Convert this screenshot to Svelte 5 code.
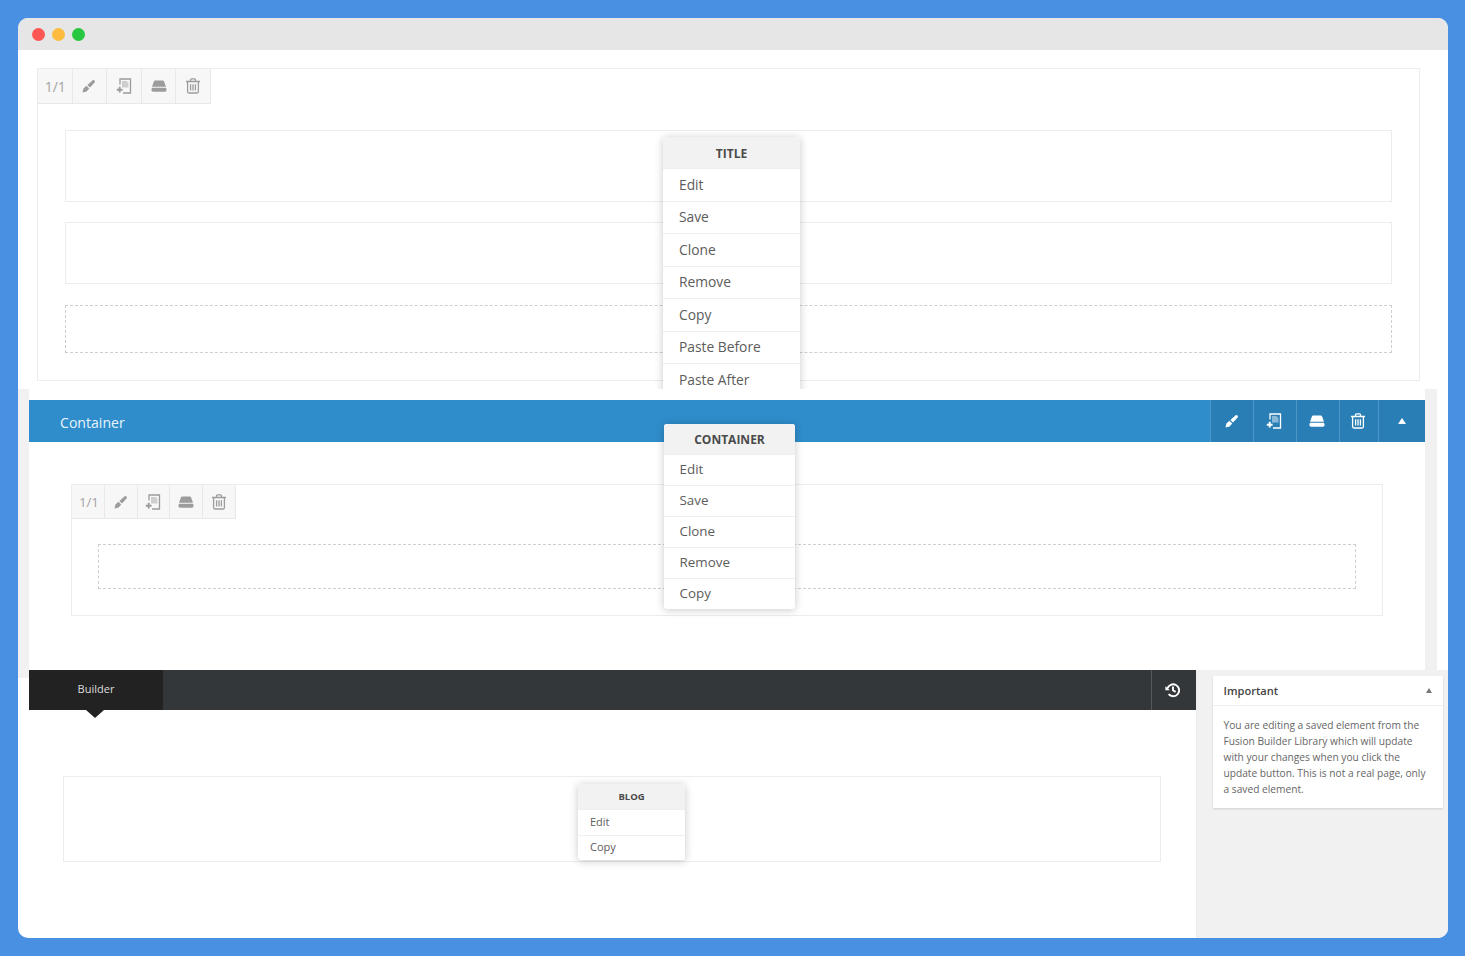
<script lang="ts">
  const titleItems = ["Edit", "Save", "Clone", "Remove", "Copy", "Paste Before", "Paste After"];
  const containerItems = ["Edit", "Save", "Clone", "Remove", "Copy"];
  const blogItems = ["Edit", "Copy"];
  const tools = ["pen", "import", "drive", "trash"];
</script>

{#snippet icon(name: string)}
  <svg class="icon" viewBox="0 0 16 16" aria-hidden="true">
    {#if name === "pen"}
      <path class="solid" d="M1.5 14.5 2.4 10.4 5.4 7.8 8.2 10.6 5.6 13.5ZM6.4 6.9 11.7 2.2C12.8 1.5 14.5 3.2 13.8 4.3L9 9.6Z" />
    {:else if name === "import"}
      <path class="line" d="M4 6.5V1H14.5V15H7" />
      <path class="soft" d="M6 3H10.5L12.5 5V9.5H6Z" />
      <path class="line thick" d="M.8 11.7H6.6M3.7 8.8V14.6" />
    {:else if name === "drive"}
      <path class="solid" d="M4.2 2.5H11.8C12.4 2.5 12.8 2.8 13 3.3L15 8.7H1L3 3.3C3.2 2.8 3.6 2.5 4.2 2.5ZM2 9.8H14C14.8 9.8 15.5 10.4 15.5 11.2V12.3C15.5 13.1 14.8 13.7 14 13.7H2C1.2 13.7 .5 13.1 .5 12.3V11.2C.5 10.4 1.2 9.8 2 9.8Z" />
    {:else if name === "trash"}
      <path class="line" d="M1 3.5H15M5.5 3.5V1.8C5.5 1.3 6 .8 6.5 .8H9.5C10 .8 10.5 1.3 10.5 1.8V3.5M2.6 3.5V13.5C2.6 14.3 3.2 15 3.9 15H12.1C12.8 15 13.4 14.3 13.4 13.5V3.5" />
      <path class="line" d="M5.6 6.2V12.5M8 6.2V12.5M10.4 6.2V12.5" />
    {/if}
  </svg>
{/snippet}

{#snippet toolbar()}
  <div class="toolbar">
    <span class="tool ratio">1/1</span>
    {#each tools as tool}
      <span class="tool">{@render icon(tool)}</span>
    {/each}
  </div>
{/snippet}

{#snippet menu(title: string, items: string[], kind: string)}
  <div class="menu {kind}">
    <div class="menu-head">{title}</div>
    {#each items as item}
      <div class="menu-item">{item}</div>
    {/each}
  </div>
{/snippet}

<div class="window">
  <header class="titlebar">
    <span class="dot red"></span>
    <span class="dot amber"></span>
    <span class="dot green"></span>
  </header>

  <section class="first">
    <div class="frame">
      {@render toolbar()}
      <div class="rows">
        <div class="row tall"></div>
        <div class="row mid"></div>
        <div class="row dashed"></div>
      </div>
    </div>
    {@render menu("TITLE", titleItems, "menu-title")}
  </section>

  <section class="second">
    <div class="container">
      <div class="bar">
        <span class="bar-label">Container</span>
        <div class="bar-actions">
          {#each tools as tool}
            <span class="bar-action">{@render icon(tool)}</span>
          {/each}
          <span class="bar-action last"><i class="caret-up white"></i></span>
        </div>
      </div>
      <div class="container-body">
        <div class="frame inner">
          {@render toolbar()}
          <div class="dashed-wrap">
            <div class="row dashed inner-dashed"></div>
          </div>
        </div>
      </div>
    </div>
    {@render menu("CONTAINER", containerItems, "menu-container")}
  </section>

  <section class="third">
    <div class="gutter"><div class="gutter-top"></div></div>
    <div class="main">
      <div class="tabs">
        <span class="tab">Builder</span>
        <span class="history">
          <svg class="icon" viewBox="0 0 16 16" aria-hidden="true">
            <path class="line thick" d="M2.4 6.6A6 6 0 1 1 3.6 12.2" />
            <path class="solid white-fill" d="M.4 4.2 4.8 8.2H.4Z" />
            <path class="line thick" d="M8 4.6V8.3L10.6 9.9" />
          </svg>
        </span>
      </div>
      <div class="main-body">
        <div class="row blog"></div>
      </div>
      {@render menu("BLOG", blogItems, "menu-blog")}
    </div>
    <aside class="sidebar">
      <div class="card">
        <div class="card-head">
          <span>Important</span>
          <i class="caret-up small"></i>
        </div>
        <p>You are editing a saved element from the Fusion Builder Library which will update with your changes when you click the update button. This is not a real page, only a saved element.</p>
      </div>
    </aside>
  </section>
</div>

<style>
  :global(body) {
    background: #4a90e2;
    font-family: "Open Sans", "Liberation Sans", sans-serif;
    color: #555;
  }

  .window {
    box-sizing: border-box;
    width: 1430px;
    height: 920px;
    margin: 18px 0 0 18px;
    background: #fff;
    border-radius: 10px;
    overflow: hidden;
    display: flex;
    flex-direction: column;
  }

  .titlebar {
    height: 32px;
    background: #e6e6e6;
    display: flex;
    align-items: center;
    gap: 7px;
    padding-left: 14px;
    flex: none;
  }

  .dot {
    width: 13px;
    height: 13px;
    border-radius: 50%;
  }

  .red { background: #fc5753; }
  .amber { background: #fdbc40; }
  .green { background: #27c83f; }

  section {
    position: relative;
    flex: none;
    box-sizing: border-box;
  }

  .first {
    height: 339px;
    padding: 18px 28px 0 19px;
    overflow: hidden;
  }

  .frame {
    box-sizing: border-box;
    border: 1px solid #ededed;
    height: 313px;
  }

  .toolbar {
    display: flex;
    width: max-content;
    background: #f7f7f7;
  }

  .tool {
    box-sizing: border-box;
    width: 34.6px;
    height: 35px;
    display: flex;
    align-items: center;
    justify-content: center;
    border-right: 1px solid #e8e8e8;
    border-bottom: 1px solid #e8e8e8;
    color: #9c9c9c;
    font-size: 14px;
  }

  .inner .tool {
    width: 32.8px;
    height: 34px;
  }

  .icon {
    width: 16px;
    height: 16px;
    display: block;
  }

  .solid { fill: currentColor; }
  .soft { fill: currentColor; opacity: 0.45; }
  .line { fill: none; stroke: currentColor; stroke-width: 1.3; }
  .thick { stroke-width: 1.9; }
  .white-fill { fill: #fff; }

  .rows {
    padding: 26px 27px 0;
    display: flex;
    flex-direction: column;
    gap: 20px;
  }

  .row {
    box-sizing: border-box;
    border: 1px solid #ededed;
  }

  .tall { height: 72px; }
  .mid { height: 62px; }

  .row.dashed {
    height: 48px;
    margin-top: 1px;
    border: 1px dashed #cfcfcf;
  }

  .menu {
    position: absolute;
    z-index: 2;
    background: #fff;
    border-radius: 3px;
    box-shadow: 0 1px 8px rgba(0, 0, 0, 0.22);
    color: #5c5c5c;
    font-size: 13.8px;
  }

  .menu-head {
    display: flex;
    align-items: center;
    justify-content: center;
    background: #f2f2f2;
    font-weight: 700;
    font-size: 12px;
    color: #4a4a4a;
    border-radius: 3px 3px 0 0;
  }

  .menu-item {
    box-sizing: border-box;
    display: flex;
    align-items: center;
    border-top: 1px solid #eee;
    padding-left: 16px;
  }

  .menu-item:first-of-type { border-top: 0; }

  .menu-title {
    left: 645px;
    top: 87px;
    width: 137px;
  }

  .menu-title .menu-head { height: 31px; padding-top: 1px; box-sizing: border-box; }
  .menu-title .menu-item { height: 32.5px; padding-bottom: 1px; }

  .menu-container {
    left: 646px;
    top: 35px;
    width: 131px;
    font-size: 13.4px;
  }

  .menu-container .menu-head { height: 30px; font-size: 12px; }
  .menu-container .menu-item { height: 31px; padding-bottom: 2px; padding-left: 15.5px; }

  .menu-blog {
    left: 549px;
    top: 114px;
    width: 107px;
    font-size: 11px;
  }

  .menu-blog .menu-head { height: 25px; font-size: 9.5px; }
  .menu-blog .menu-item { height: 25.5px; padding-left: 12px; padding-bottom: 2px; }

  .second {
    height: 281px;
    padding: 0 11px;
    background: linear-gradient(to right, #f1f1f1 1419px, #fff 1419px);
  }

  .container {
    height: 100%;
    background: #fff;
    padding-top: 11px;
    box-sizing: border-box;
    width: 1396px;
  }

  .bar {
    height: 42px;
    background: #2f8dcb;
    color: #e8f4fc;
    display: flex;
    justify-content: space-between;
    align-items: stretch;
  }

  .bar-label {
    padding: 2px 0 0 31px;
    font-size: 14.1px;
    align-self: center;
  }

  .bar-actions {
    display: flex;
    background: #297fb5;
  }

  .bar-action {
    box-sizing: border-box;
    width: 42.9px;
    padding-right: 1.5px;
    display: flex;
    align-items: center;
    justify-content: center;
    border-left: 1px solid #4a97c8;
    color: #fff;
  }

  .bar-action:nth-child(4) { width: 39px; }
  .bar-action.last { width: 47px; padding-right: 0; }

  .container-body {
    padding: 42px 42px 0;
  }

  .frame.inner {
    height: 132px;
  }

  .dashed-wrap {
    padding: 24px 26px 0;
  }

  .row.inner-dashed { height: 45px; }

  .ratio {
    font-size: 14px;
    color: #a3a3a3;
    padding-left: 1px;
  }

  .inner .ratio {
    font-size: 13.2px;
    padding-left: 2px;
  }

  .caret-up {
    width: 0;
    height: 0;
    border-left: 4.5px solid transparent;
    border-right: 4.5px solid transparent;
    border-bottom: 6px solid #777;
  }

  .caret-up.white { border-bottom-color: #fff; }

  .caret-up.small {
    border-left-width: 3.5px;
    border-right-width: 3.5px;
    border-bottom-width: 5px;
  }

  .third {
    height: 268px;
    display: flex;
  }

  .gutter {
    width: 11px;
    flex: none;
  }

  .gutter-top {
    height: 8px;
    background: #f1f1f1;
  }

  .main {
    width: 1167px;
    flex: none;
    position: relative;
  }

  .tabs {
    height: 40px;
    background: #33373a;
    color: #fff;
    display: flex;
    justify-content: space-between;
  }

  .tab {
    position: relative;
    width: 134px;
    box-sizing: border-box;
    padding: 0 0 4px 0;
    background: #222;
    color: #ddd;
    font-size: 11px;
    display: flex;
    align-items: center;
    justify-content: center;
  }

  .tab::after {
    content: "";
    position: absolute;
    left: 57px;
    top: 100%;
    border-left: 9px solid transparent;
    border-right: 9px solid transparent;
    border-top: 8px solid #222;
  }

  .history {
    width: 45px;
    padding-right: 2px;
    display: flex;
    align-items: center;
    justify-content: center;
    border-left: 1px solid #54585b;
    box-sizing: border-box;
  }

  .main-body {
    padding: 66px 35px 0 34px;
  }

  .blog {
    height: 86px;
  }

  .sidebar {
    flex: 1;
    background: #f1f1f1;
    border-left: 1px solid #ededed;
    padding: 6px 5px 0 16px;
  }

  .card {
    background: #fff;
    box-shadow: 0 1px 2px rgba(0, 0, 0, 0.14);
    height: 132px;
    box-sizing: border-box;
  }

  .card-head {
    height: 29px;
    display: flex;
    align-items: center;
    justify-content: space-between;
    padding: 0 11px 0 10.5px;
    border-bottom: 1px solid #efefef;
    font-size: 11.1px;
    font-weight: 600;
    color: #444;
  }

  .card p {
    margin: 0;
    padding: 11px 10px 0 10.5px;
    font-size: 10.2px;
    line-height: 16px;
    color: #666;
  }
</style>
